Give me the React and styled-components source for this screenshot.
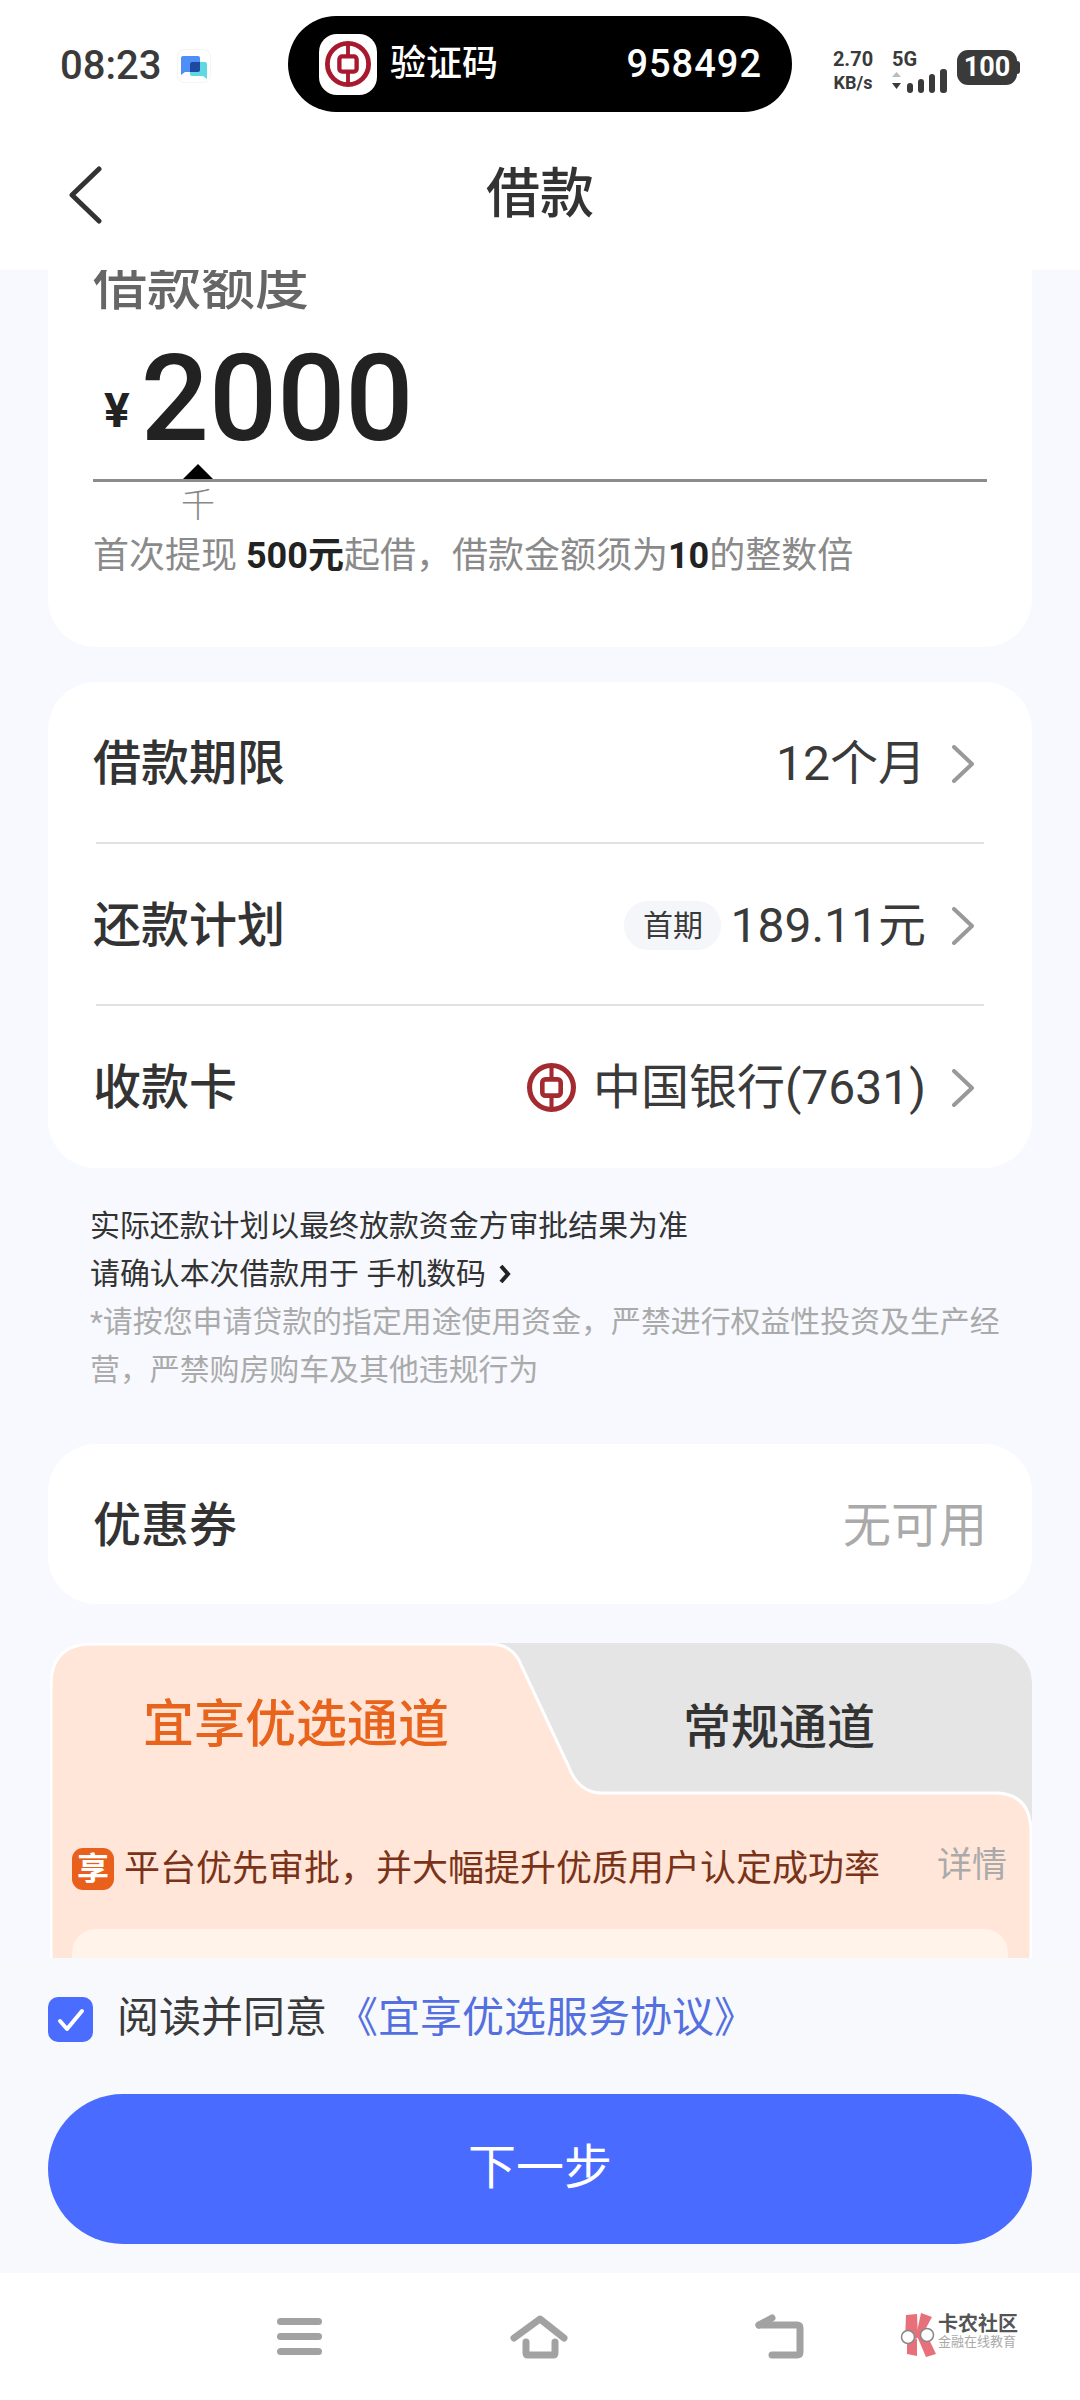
import styled, { createGlobalStyle } from 'styled-components';

const GlobalStyle = createGlobalStyle`
  * { box-sizing: border-box; }
  html, body { margin: 0; padding: 0; background: #f7f9fe; }
  body { font-family: Roboto, "Noto Sans CJK SC", sans-serif; color: #333; }
`;

const Page = styled.div`
  width: 1080px;
  height: 2400px;
  display: flex;
  flex-direction: column;
  overflow: hidden;
  background: #f7f9fe;
`;

const Top = styled.header`
  background: #fff;
  height: 270px;
  flex: none;
`;

const StatusBar = styled.div`
  height: 112px;
  display: grid;
  grid-template-columns: 288px 504px 1fr;
  padding-top: 16px;
`;

const StatusLeft = styled.div`
  display: flex;
  align-items: center;
  gap: 16px;
  height: 96px;
  padding-left: 60px;
  margin-top: 2px;
`;

const Time = styled.span`
  font-size: 40px;
  font-weight: 500;
  line-height: 44px;
  color: #3a3a3a;
`;

const Pill = styled.div`
  height: 96px;
  border-radius: 48px;
  background: #000;
  color: #fff;
  display: flex;
  align-items: center;
  padding: 0 30px 0 31px;
`;

const PillIcon = styled.div`
  width: 58px;
  height: 61px;
  border-radius: 18px;
  background: #fff;
  display: flex;
  align-items: center;
  justify-content: center;
`;

const PillLabel = styled.span`
  margin-left: 13px;
  font-size: 36px;
  font-weight: 500;
  line-height: 44px;
`;

const PillCode = styled.span`
  margin-left: auto;
  font-size: 38px;
  font-weight: 500;
  letter-spacing: 1px;
  line-height: 44px;
`;

const StatusRight = styled.div`
  display: flex;
  padding: 33px 0 0 40px;
`;

const Speed = styled.div`
  display: flex;
  flex-direction: column;
  align-items: center;
  width: 42px;
  font-weight: 700;
  color: #3a3a3a;
`;

const SpeedValue = styled.span`
  font-size: 20px;
  line-height: 20px;
`;

const SpeedUnit = styled.span`
  font-size: 18px;
  line-height: 18px;
  margin-top: 5px;
`;

const Net = styled.div`
  display: flex;
  flex-direction: column;
  margin-left: 18px;
  width: 56px;
`;

const NetLabel = styled.span`
  font-size: 20px;
  line-height: 20px;
  font-weight: 700;
  color: #3a3a3a;
`;

const Battery = styled.div`
  width: 60px;
  height: 35px;
  margin: 1px 0 0 9px;
  border-radius: 11px;
  background: #3a3a3a;
  color: #fff;
  font-size: 27px;
  font-weight: 700;
  line-height: 35px;
  text-align: center;
  position: relative;
  &::after {
    content: '';
    position: absolute;
    right: -3px;
    top: 11px;
    width: 3px;
    height: 13px;
    border-radius: 0 3px 3px 0;
    background: #3a3a3a;
  }
`;

const NavHeader = styled.div`
  height: 158px;
  padding-top: 8px;
  display: grid;
  grid-template-columns: 1fr auto 1fr;
  align-items: center;
`;

const BackButton = styled.div`
  padding-left: 66px;
  display: flex;
`;

const Title = styled.h1`
  margin: 0;
  font-size: 54px;
  font-weight: 500;
  line-height: 64px;
  color: #333;
`;

const Scroll = styled.main`
  height: 1688px;
  flex: none;
  overflow: hidden;
  padding: 0 48px;
`;

const Card = styled.section`
  background: #fff;
  border-radius: 48px;
`;

const AmountCard = styled(Card)`
  margin-top: -40px;
  padding: 27px 45px 69px;
`;

const AmountTitle = styled.div`
  font-size: 54px;
  font-weight: 500;
  line-height: 60px;
  color: #666;
`;

const AmountRow = styled.div`
  display: flex;
  align-items: center;
  margin-top: 20px;
  height: 120px;
  line-height: 120px;
  color: #222;
`;

const Yen = styled.span`
  font-size: 48px;
  font-weight: 700;
  line-height: 48px;
  margin: 28px 11px 0 11px;
`;

const Amount = styled.span`
  margin-top: 4px;
  font-size: 120px;
  font-weight: 500;
`;

const Caret = styled.div`
  width: 0;
  height: 0;
  margin: 7px 0 0 90px;
  border-left: 15px solid transparent;
  border-right: 15px solid transparent;
  border-bottom: 15px solid #000;
`;

const Rule = styled.div`
  height: 3px;
  background: #8c8c8c;
`;

const Tick = styled.div`
  margin: 6px 0 0 88px;
  font-size: 34px;
  line-height: 34px;
  font-weight: 300;
  color: #888;
`;

const Hint = styled.p`
  margin: 12px 0 0;
  font-size: 36px;
  line-height: 44px;
  color: #8a8a8a;
  white-space: nowrap;
  b { color: #222; font-weight: 700; }
`;

const DetailCard = styled(Card)`
  margin-top: 35px;
  padding-bottom: 2px;
`;

const Row = styled.div`
  height: 160px;
  padding: 3px ${p => p.$right || 58}px 0 45px;
  display: flex;
  align-items: center;
  justify-content: space-between;
`;

const RowLabel = styled.span`
  font-size: 48px;
  font-weight: 500;
  line-height: 60px;
  color: #333;
`;

const RowValue = styled.div`
  display: flex;
  align-items: center;
  font-size: 48px;
  line-height: 60px;
  color: ${p => p.$muted ? '#aaa' : '#3a3a3a'};
`;

const Divider = styled.div`
  height: 2px;
  margin: 0 48px;
  background: #e2e2e2;
`;

const FirstTag = styled.span`
  width: 97px;
  height: 49px;
  margin-right: 9px;
  border-radius: 24px;
  background: #f5f6fa;
  font-size: 30px;
  line-height: 49px;
  text-align: center;
`;

const Chevron = styled.svg`
  margin-left: 26px;
  flex: none;
`;

const BankMark = styled.span`
  display: flex;
  margin-right: 17px;
`;

const Notes = styled.div`
  margin-top: 34px;
  padding-left: 42px;
  font-size: 29.9px;
  line-height: 48px;
  color: #333;
  width: 970px;
`;

const NoteLine = styled.div`
  display: flex;
  align-items: center;
  gap: 12px;
`;

const NoteMuted = styled.div`
  color: #aaa;
`;

const CouponCard = styled(Card)`
  margin-top: 50px;
`;

const Channel = styled.section`
  position: relative;
  margin: 39px 0 0 2px;
  height: 420px;
  border-radius: 40px 40px 0 0;
  background: #e5e5e5;
`;

const ChannelShape = styled.svg`
  position: absolute;
  left: 0;
  top: 0;
`;

const ChannelBody = styled.div`
  position: relative;
`;

const Tabs = styled.div`
  display: grid;
  grid-template-columns: 492px 474px;
  height: 150px;
  padding-top: 9px;
`;

const TabLabel = styled.div`
  display: flex;
  align-items: center;
  justify-content: center;
  padding-bottom: ${p => p.$active ? 6 : 0}px;
  font-size: ${p => p.$active ? 51 : 48}px;
  font-weight: 500;
  color: ${p => p.$active ? '#e8631c' : '#333'};
`;

const Perk = styled.div`
  display: flex;
  align-items: center;
  height: 48px;
  margin-top: 52px;
  padding: 0 25px 0 22px;
`;

const PerkBadge = styled.span`
  width: 42px;
  height: 42px;
  border-radius: 11px;
  background: #e8601c;
  color: #fff;
  font-size: 32px;
  font-weight: 700;
  line-height: 42px;
  text-align: center;
`;

const PerkText = styled.span`
  margin-left: 10px;
  font-size: 36px;
  line-height: 48px;
  color: #7a3318;
  white-space: nowrap;
`;

const PerkMore = styled.span`
  margin-left: auto;
  margin-top: -6px;
  font-size: 35px;
  line-height: 48px;
  color: #aaa;
`;

const PerkPanel = styled.div`
  height: 200px;
  margin: 36px 24px 0 22px;
  border-radius: 24px;
  background: #fff3ea;
`;

const Footer = styled.div`
  height: 315px;
  flex: none;
  padding: 39px 48px 0;
  background: #f8f9fc;
`;

const Agreement = styled.div`
  display: flex;
  align-items: center;
  height: 45px;
  font-size: 42px;
  color: #3a3a3a;
`;

const AgreementText = styled.span`
  margin-top: -12px;
`;

const CheckBox = styled.span`
  width: 45px;
  height: 45px;
  border-radius: 10px;
  background: #4a6cff;
  margin-right: 24px;
  display: flex;
  align-items: center;
  justify-content: center;
`;

const AgreementLink = styled(AgreementText)`
  margin-left: 9px;
  font-size: 42px;
  color: #5470e0;
`;

const NextButton = styled.button`
  display: block;
  width: 100%;
  height: 150px;
  margin-top: 52px;
  padding: 0 0 12px;
  border: none;
  border-radius: 75px;
  background: #4a6bff;
  color: #fff;
  font-family: inherit;
  font-size: 48px;
`;

const BottomNav = styled.nav`
  height: 127px;
  flex: none;
  display: flex;
  align-items: flex-start;
  gap: 186px;
  padding: 41px 0 0 275px;
  background: #fff;
`;

const Brand = styled.div`
  display: flex;
  align-items: flex-start;
  margin-left: -92px;
  margin-top: -2px;
`;

const BrandText = styled.div`
  display: flex;
  flex-direction: column;
  width: 80px;
`;

const BrandName = styled.span`
  font-size: 20px;
  line-height: 24px;
  font-weight: 700;
  color: #555;
  white-space: nowrap;
`;

const BrandSub = styled.span`
  margin-top: -1px;
  font-size: 13px;
  line-height: 14px;
  color: #aaa;
  white-space: nowrap;
`;

const BocLogo = ({ size, color = '#a8182e' }) => (
  <svg width={size} height={size} viewBox="0 0 48 48" fill="none" stroke={color}>
    <circle cx="24" cy="24" r="21.500" strokeWidth="5" />
    <rect x="15" y="16" width="18" height="16" rx="3" strokeWidth="4.500" />
    <path d="M24 3v13M24 32v13" strokeWidth="4" />
  </svg>
);

const ArrowRight = () => (
  <Chevron width="22" height="38" viewBox="0 0 22 38" fill="none" stroke="#999" strokeWidth="4" strokeLinecap="round" strokeLinejoin="round">
    <path d="M2 2l18 17L2 36" />
  </Chevron>
);

const ChatIcon = () => (
  <svg width="34" height="34" viewBox="0 0 34 34">
    <rect x=".5" y=".5" width="33" height="33" rx="7" fill="#fff" stroke="#f4f4f4" />
    <path d="M4 9q0-2 2-2h15q2 0 2 2v12q0 2-2 2H8l-4 3z" fill="#4d8ff7" />
    <path d="M13 15q0-2 2-2h13q2 0 2 2v15l-4-3H15q-2 0-2-2z" fill="#5fd8e4" />
    <path d="M13 15q0-2 2-2h8v8q0 2-2 2h-8z" fill="#1d4aa0" />
  </svg>
);

const SignalIcon = () => (
  <svg width="56" height="26" viewBox="0 0 56 26" fill="#3a3a3a">
    <path d="M0 8l4.500-5L9 8z" fill="#bbb" />
    <path d="M0 11h9l-4.500 6z" transform="translate(0 3)" />
    <rect x="15" y="14" width="6" height="10" rx="3" />
    <rect x="26" y="10" width="6" height="14" rx="3" />
    <rect x="37" y="5" width="6" height="19" rx="3" />
    <rect x="48" y="0" width="7" height="24" rx="3" />
  </svg>
);

const MenuIcon = () => (
  <svg width="49" height="42" viewBox="0 0 49 42" fill="#a2a2a2">
    <rect x="2" y="4" width="45" height="7" rx="3.500" />
    <rect x="2" y="19" width="45" height="7" rx="3.500" />
    <rect x="2" y="34" width="45" height="7" rx="3.500" />
  </svg>
);

const HomeIcon = () => (
  <svg width="58" height="48" viewBox="0 0 58 48" fill="none" stroke="#a2a2a2" strokeWidth="7" strokeLinecap="round" strokeLinejoin="round">
    <path d="M4 24L30 5l24 19" />
    <path d="M16 28v11q0 2 2 2h25q2 0 2-2V28" />
  </svg>
);

const ReturnIcon = () => (
  <svg width="52" height="46" viewBox="0 0 52 46" fill="none" stroke="#a2a2a2" strokeWidth="7" strokeLinecap="round" strokeLinejoin="round">
    <path d="M5 11h38q3 0 3 3v24q0 3-3 3H18" />
    <path d="M5 11l13-7" />
  </svg>
);

const BrandLogo = () => (
  <svg width="38" height="46" viewBox="0 0 38 46">
    <path d="M6 3l11-1 1 24-13 4z" fill="#e8707a" />
    <path d="M21 1l11 4-12 22-4-3z" fill="#e8707a" />
    <path d="M17 24l9-3 10 21-10 3z" fill="#e8707a" />
    <path d="M7 28l10-1v17l-10-2z" fill="#e8707a" />
    <circle cx="8" cy="25" r="6.500" fill="#fff" stroke="#888" strokeWidth="1.500" />
    <circle cx="27" cy="23" r="6.500" fill="#fff" stroke="#888" strokeWidth="1.500" />
  </svg>
);

export default function App() {
  return (
    <Page>
      <GlobalStyle />
      <Top>
        <StatusBar>
          <StatusLeft>
            <Time>08:23</Time>
            <ChatIcon />
          </StatusLeft>
          <Pill>
            <PillIcon><BocLogo size={46} /></PillIcon>
            <PillLabel>验证码</PillLabel>
            <PillCode>958492</PillCode>
          </Pill>
          <StatusRight>
            <Speed>
              <SpeedValue>2.70</SpeedValue>
              <SpeedUnit>KB/s</SpeedUnit>
            </Speed>
            <Net>
              <NetLabel>5G</NetLabel>
              <SignalIcon />
            </Net>
            <Battery>100</Battery>
          </StatusRight>
        </StatusBar>
        <NavHeader>
          <BackButton>
            <svg width="38" height="58" viewBox="0 0 38 58" fill="none" stroke="#333" strokeWidth="5" strokeLinecap="round" strokeLinejoin="round">
              <path d="M33 3L6 29l27 26" />
            </svg>
          </BackButton>
          <Title>借款</Title>
          <div />
        </NavHeader>
      </Top>

      <Scroll>
        <AmountCard>
          <AmountTitle>借款额度</AmountTitle>
          <AmountRow>
            <Yen>¥</Yen>
            <Amount>2000</Amount>
          </AmountRow>
          <Caret />
          <Rule />
          <Tick>千</Tick>
          <Hint>首次提现 <b>500元</b>起借，借款金额须为<b>10</b>的整数倍</Hint>
        </AmountCard>

        <DetailCard>
          <Row>
            <RowLabel>借款期限</RowLabel>
            <RowValue>12个月<ArrowRight /></RowValue>
          </Row>
          <Divider />
          <Row>
            <RowLabel>还款计划</RowLabel>
            <RowValue>
              <FirstTag>首期</FirstTag>
              189.11元
              <ArrowRight />
            </RowValue>
          </Row>
          <Divider />
          <Row>
            <RowLabel>收款卡</RowLabel>
            <RowValue>
              <BankMark><BocLogo size={49} color="#a32a2f" /></BankMark>
              中国银行(7631)
              <ArrowRight />
            </RowValue>
          </Row>
        </DetailCard>

        <Notes>
          <div>实际还款计划以最终放款资金方审批结果为准</div>
          <NoteLine>
            请确认本次借款用于 手机数码
            <svg width="14" height="20" viewBox="0 0 14 20" fill="none" stroke="#222" strokeWidth="4">
              <path d="M3 2l7 8-7 8" />
            </svg>
          </NoteLine>
          <NoteMuted>*请按您申请贷款的指定用途使用资金，严禁进行权益性投资及生产经营，严禁购房购车及其他违规行为</NoteMuted>
        </Notes>

        <CouponCard>
          <Row $right={45}>
            <RowLabel>优惠券</RowLabel>
            <RowValue $muted>无可用</RowValue>
          </Row>
        </CouponCard>

        <Channel>
          <ChannelShape width="982" height="420" viewBox="0 0 982 420">
            <path
              d="M1 420V42Q1 1 42 1H440Q464 1 472 24L518 122Q528 150 552 150H945Q981 150 981 190V420Z"
              fill="#ffe6d9"
              stroke="#fff"
              strokeWidth="3"
            />
          </ChannelShape>
          <ChannelBody>
            <Tabs>
              <TabLabel $active>宜享优选通道</TabLabel>
              <TabLabel>常规通道</TabLabel>
            </Tabs>
            <Perk>
              <PerkBadge>享</PerkBadge>
              <PerkText>平台优先审批，并大幅提升优质用户认定成功率</PerkText>
              <PerkMore>详情</PerkMore>
            </Perk>
            <PerkPanel />
          </ChannelBody>
        </Channel>
      </Scroll>

      <Footer>
        <Agreement>
          <CheckBox>
            <svg width="28" height="24" viewBox="0 0 28 24" fill="none" stroke="#fff" strokeWidth="4" strokeLinecap="round" strokeLinejoin="round">
              <path d="M3 13l7 8L25 3" />
            </svg>
          </CheckBox>
          <AgreementText>阅读并同意</AgreementText>
          <AgreementLink>《宜享优选服务协议》</AgreementLink>
        </Agreement>
        <NextButton>下一步</NextButton>
      </Footer>

      <BottomNav>
        <MenuIcon />
        <HomeIcon />
        <ReturnIcon />
        <Brand>
          <BrandLogo />
          <BrandText>
            <BrandName>卡农社区</BrandName>
            <BrandSub>金融在线教育</BrandSub>
          </BrandText>
        </Brand>
      </BottomNav>
    </Page>
  );
}
